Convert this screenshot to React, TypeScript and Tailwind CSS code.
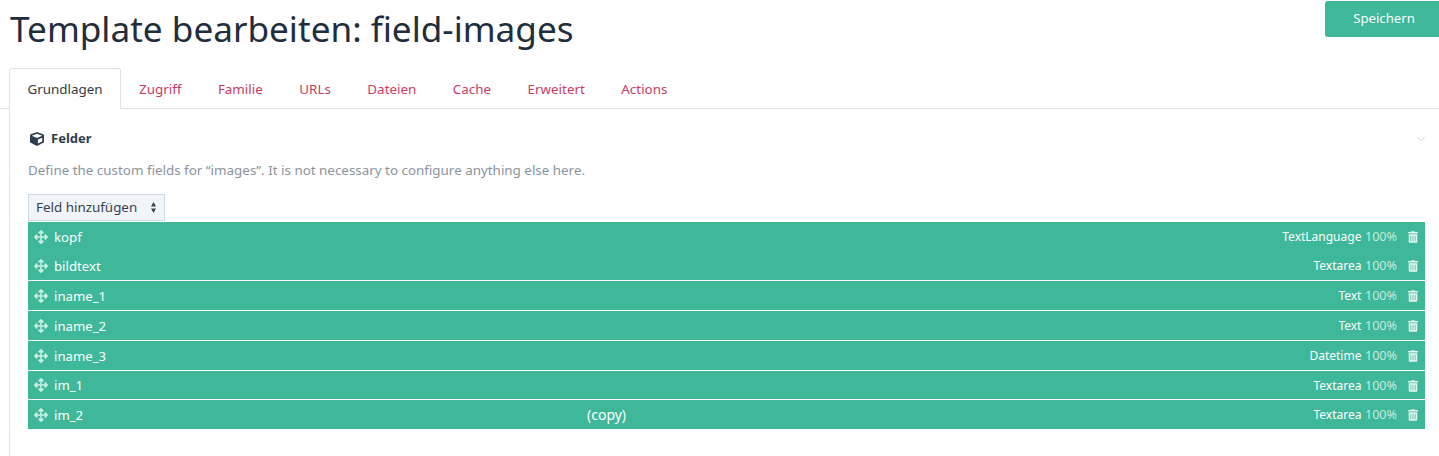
import { ChevronDown } from "lucide-react";
import { FaArrowsAlt, FaCube, FaTrashAlt } from "react-icons/fa";

const tabs = ["Zugriff", "Familie", "URLs", "Dateien", "Cache", "Erweitert", "Actions"];
const rows: { name: string; type: string; h: string; line: boolean; copy?: boolean }[] = [
  { name: "kopf", type: "TextLanguage", h: "h-[29px]", line: false },
  { name: "bildtext", type: "Textarea", h: "h-[29px]", line: true },
  { name: "iname_1", type: "Text", h: "h-[29px]", line: true },
  { name: "iname_2", type: "Text", h: "h-[29px]", line: true },
  { name: "iname_3", type: "Datetime", h: "h-[29px]", line: true },
  { name: "im_1", type: "Textarea", h: "h-[28px]", line: true },
  { name: "im_2", type: "Textarea", h: "h-[29px]", line: false, copy: true },
];

export default function App() {
  return (
    <div className="h-[456px] w-[1439px] overflow-hidden bg-white font-['Noto_Sans',sans-serif] text-[13.4px] text-[#1f2d3d]">
      <div className="flex h-[68px] items-start justify-between">
        <h1 className="ml-[10px] mt-[4px] text-[35.15px] leading-[48px] text-[#1f2d3d]">Template bearbeiten: field-images</h1>
        <button className="mr-[-4px] mt-px h-[36px] w-[118px] shrink-0 rounded-[3px] bg-[#3eb898] text-[13.2px] text-white">Speichern</button>
      </div>

      <div className="flex h-[41px] border-b border-[#dde2e6] pl-[9px]">
        <div className="flex h-[41px] w-[112px] items-center justify-center rounded-t-[3px] border border-b-0 border-[#dde2e6] bg-white pt-[1px] text-[#333c44]">Grundlagen</div>
        <div className="flex h-[40px] items-center gap-[36.5px] pl-[18px] pt-[2px] text-[#c93a64]">
          {tabs.map((t) => (
            <span key={t}>{t}</span>
          ))}
        </div>
      </div>

      <div className="ml-[9px] h-[347px] border-l border-[#dde2e6] pl-[18px] pr-[14px] pt-[20px]">
        <div className="flex h-[20px] items-center justify-between">
          <div className="flex items-center gap-[7px] text-[13px] font-bold text-[#2c3e50]">
            <FaCube className="ml-[2px] h-[14px] w-[14px] text-[#2c3e50]" />
            <span>Felder</span>
          </div>
          <ChevronDown className="mr-[-3px] h-[14px] w-[14px] text-[#c8ccd0]" strokeWidth={1.5} />
        </div>
        <p className="mt-[11px] h-[20px] leading-[20px] text-[#8a939d]">
          Define the custom fields for “images”. It is not necessary to configure anything else here.
        </p>
        <div className="mt-[14px] flex h-[27px] w-[137px] items-center justify-between border border-[#ced9e4] bg-[#f1f4f9] pb-px pl-[7px] pr-[8px] text-[#36424e]">
          <span>Feld hinzufügen</span>
          <svg width="5" height="11" viewBox="0 0 5 11" className="fill-[#36424e]">
            <path d="M2.5 0 5 4.4H0zM2.5 11 0 6.6h5z" />
          </svg>
        </div>
        <div className="mt-px">
          {rows.map((r) => (
            <div
              key={r.name}
              className={`${r.h} relative flex items-center bg-[#3eb898] pl-[6px] pr-[7px] pt-[2px] text-[13.2px] text-white ${r.line ? "mb-px" : ""}`}
            >
              <FaArrowsAlt className="-mt-[2px] h-[14px] w-[14px] text-[#c9efe4]" />
              <span className="ml-[6px]">{r.name}</span>
              {r.copy && <span className="absolute left-[559px] -mt-[3px] text-[14px]">(copy)</span>}
              <span className="ml-auto flex items-baseline">
                <span className="text-[12px]">{r.type}</span>
                <span className="ml-[3.5px] text-[12.6px] text-[#c5eadf]">100%</span>
              </span>
              <FaTrashAlt className="-mt-px ml-[11px] h-[12px] w-[10px] text-[#e4f6f0]" />
            </div>
          ))}
        </div>
      </div>
    </div>
  );
}
